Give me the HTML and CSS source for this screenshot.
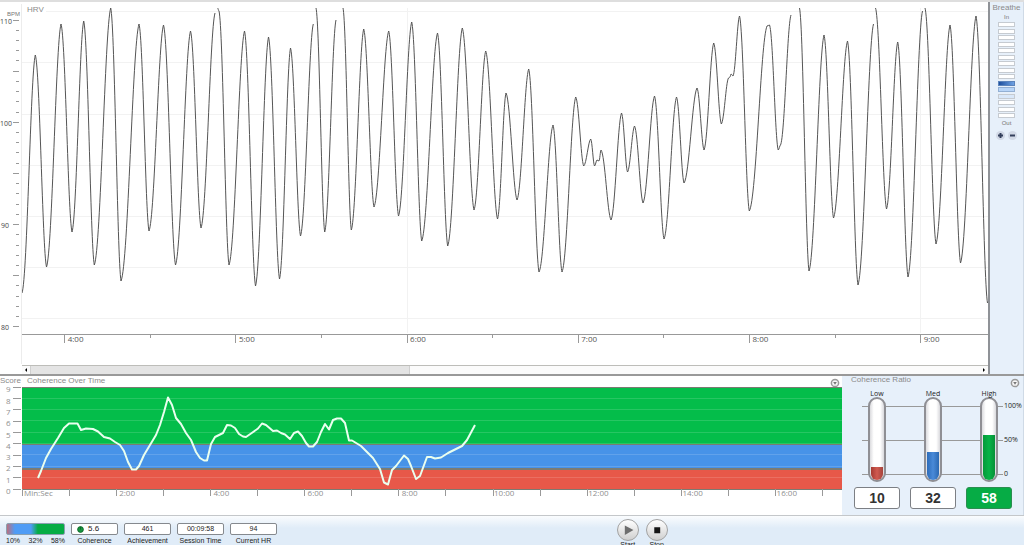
FILE: index.html
```html
<!DOCTYPE html>
<html lang="en">
<head>
  <meta charset="UTF-8" />
  <meta name="viewport" content="width=device-width, initial-scale=1.0" />
  <title>HRV Session</title>
  <link rel="stylesheet" href="styles.css">
</head>
<body>

  <main class="top">
    <section class="hrv">
      <div class="chart">
        <svg class="axis" id="hrvAxis"></svg>
        <svg class="plot hrv-plot" id="hrvPlot">
          <text class="title" x="5" y="10">HRV</text>
        </svg>
      </div>
      <div class="scrollbar">
        <button class="arrow" aria-label="Scroll left"><svg viewBox="0 0 8 8"><path d="M5 2v4L3 4z"/></svg></button>
        <div class="track"><div class="thumb"></div></div>
        <button class="arrow" aria-label="Scroll right"><svg viewBox="0 0 8 8"><path d="M3 2v4l2-2z"/></svg></button>
      </div>
    </section>

    <aside class="breathe">
      <h2>Breathe</h2>
      <span class="small">In</span>
      <div class="bars">
        <i></i><i></i><i></i><i></i><i></i><i></i><i></i><i></i><i></i>
        <i class="now"></i><i class="trail"></i><i class="fade"></i>
        <i></i><i></i><i></i>
      </div>
      <span class="small">Out</span>
      <div class="pace">
        <button aria-label="Faster"><svg viewBox="0 0 9 9"><path d="M2 4.5h5M4.5 2v5"/></svg></button>
        <button aria-label="Slower"><svg viewBox="0 0 9 9"><path d="M2 4.5h5"/></svg></button>
      </div>
    </aside>
  </main>

  <div class="middle">
    <section class="coherence">
      <div class="panel-head">
        <span class="score">Score</span>
        <h2>Coherence Over Time</h2>
        <button class="menu" aria-label="Chart options"><svg viewBox="0 0 10 10"><circle cx="5" cy="5" r="3.6"/><path d="M3.2 4h3.6L5 6.8z"/></svg></button>
      </div>
      <div class="chart">
        <svg class="axis" id="cohAxis"></svg>
        <svg class="plot coh-plot" id="cohPlot"></svg>
      </div>
    </section>

    <section class="ratio">
      <div class="panel-head">
        <h2>Coherence Ratio</h2>
        <button class="menu" aria-label="Ratio options"><svg viewBox="0 0 10 10"><circle cx="5" cy="5" r="3.6"/><path d="M3.2 4h3.6L5 6.8z"/></svg></button>
      </div>
      <svg class="gauges" id="gauges" viewBox="0 0 181 96">
        <defs>
          <linearGradient id="glass">
            <stop offset="0" stop-color="#d2d2d6"/>
            <stop offset=".3" stop-color="#fff"/>
            <stop offset=".7" stop-color="#fff"/>
            <stop offset="1" stop-color="#cfcfd4"/>
          </linearGradient>
          <linearGradient id="low"><stop offset="0" stop-color="#a53a32"/><stop offset=".5" stop-color="#d05a50"/><stop offset="1" stop-color="#a5443c"/></linearGradient>
          <linearGradient id="med"><stop offset="0" stop-color="#2c6cba"/><stop offset=".5" stop-color="#4a8ad8"/><stop offset="1" stop-color="#2c69b2"/></linearGradient>
          <linearGradient id="high"><stop offset="0" stop-color="#05993a"/><stop offset=".5" stop-color="#06b446"/><stop offset="1" stop-color="#078f38"/></linearGradient>
        </defs>
      </svg>
      <div class="values">
        <output>10</output>
        <output>32</output>
        <output class="on">58</output>
      </div>
    </section>
  </div>

  <footer class="status">
    <div class="split">
      <div class="split-bar"></div>
      <div class="split-text"><span>10%</span><span>32%</span><span>58%</span></div>
    </div>
    <div class="stat"><b class="with-icon"><svg viewBox="0 0 8 8"><circle cx="4" cy="4" r="3.3"/><path d="M4 1v3"/></svg>5.6</b><span>Coherence</span></div>
    <div class="stat"><b>461</b><span>Achievement</span></div>
    <div class="stat"><b>00:09:58</b><span>Session Time</span></div>
    <div class="stat"><b>94</b><span>Current HR</span></div>
    <div class="transport">
      <button><svg viewBox="0 0 22 22"><path d="M7.500 6v10.500L17 11z" fill="#6e6e6e"/></svg><span>Start</span></button>
      <button><svg viewBox="0 0 22 22"><path d="M8 8h6.500v6.500H8z" fill="#151515"/></svg><span>Stop</span></button>
    </div>
  </footer>

  <script src="script.js"></script>
</body>
</html>
```
FILE: styles.css
```css
* {
  box-sizing: border-box;
}

body {
  margin: 0;
  height: 100vh;
  overflow: hidden;
  display: flex;
  flex-direction: column;
  background: #fff;
  font-family: "Liberation Sans", Arial, sans-serif;
  font-size: 8px;
  color: #333;
}

h2 {
  margin: 0;
  font-size: 8px;
  line-height: 10px;
  font-weight: normal;
  color: #8b8b8b;
}

button {
  padding: 0;
  border: 0;
  background: none;
  font: inherit;
  color: inherit;
  cursor: pointer;
}

svg {
  display: block;
}

svg text {
  font-family: "Open Sans", sans-serif;
  font-size: 8px;
}

/* heart rate chart */
.top {
  flex: 1;
  display: flex;
  min-height: 0;
  border-top: 2px solid #dedede;
  border-bottom: 2px solid #999;
}

.hrv {
  flex: 1;
  min-width: 0;
  display: flex;
  flex-direction: column;
  justify-content: space-between;
  border-right: 2px solid #8f9297;
}

.chart {
  display: grid;
  grid-template-columns: 22px 1fr;
}

.axis {
  width: 22px;
  height: 100%;
}

.plot {
  width: 100%;
}

.hrv-plot {
  height: 362px;
}

.title {
  fill: #8b8b8b;
}

svg .title {
  font-family: "Liberation Sans", Arial, sans-serif;
}

.tick {
  stroke: #999;
}

.grid {
  stroke: #f2f2f2;
}

.edge {
  stroke: #ececec;
}

.label {
  fill: #555;
}

svg .axis-label {
  font-size: 7px;
  fill: #444;
}

svg .unit {
  font-size: 6px;
  fill: #777;
}

.trace {
  fill: none;
  stroke: #555;
  stroke-width: 1;
  stroke-linejoin: round;
}

.scrollbar {
  display: flex;
  height: 9px;
  margin-left: 22px;
  border-top: 1px solid #bdbdb9;
  background: #fbfbfb;
}

.arrow {
  width: 8px;
}

.arrow svg {
  width: 8px;
  height: 8px;
}

.track {
  flex: 1;
}

.thumb {
  width: 40%;
  height: 8px;
  background: #e4e4e4;
  border: solid #cfcfcf;
  border-width: 0 1px;
}

/* breathing pacer */
.breathe {
  width: 34px;
  display: flex;
  flex-direction: column;
  align-items: center;
  padding-top: 1px;
  background: #e7f0fa;
  border-right: 1px solid #cfdae6;
}

.small {
  font-size: 6px;
  line-height: 8px;
  color: #777;
}

.bars {
  height: 96px;
  margin: 1px 0;
  display: flex;
  flex-direction: column;
  justify-content: space-between;
}

.bars i {
  width: 17px;
  height: 5px;
  background: #fff;
  border: 1px solid #c6cbd1;
}

.bars .now {
  background: linear-gradient(to right, #1d4f9e, #6ea2e4);
  border-color: #5b83bb;
}

.bars .trail {
  background: #b8d5f8;
  border-color: #93b0d4;
}

.bars .fade {
  background: #d9e8fa;
}

.pace {
  display: flex;
  gap: 3px;
  margin-top: 4px;
}

.pace svg {
  width: 9px;
  height: 9px;
  border-radius: 50%;
  background: #d2d9e6;
  stroke: #34405c;
  stroke-width: 2;
}

/* coherence panels */
.middle {
  display: flex;
  height: 140px;
  border-bottom: 1px solid #c4c7ca;
}

.coherence {
  flex: 1;
  min-width: 0;
}

.panel-head {
  display: flex;
  align-items: flex-start;
  height: 11px;
}

.coherence .panel-head {
  height: 10px;
}

.score {
  width: 27px;
  line-height: 10px;
  color: #8b8b8b;
}

.menu {
  margin: 2px 2px 0 auto;
}

.menu svg {
  width: 10px;
  height: 10px;
  fill: #777;
}

.menu circle {
  fill: #f6f6f6;
  stroke: #999;
  stroke-width: 1.5;
}

.coh-plot {
  height: 116px;
}

#cohAxis {
  overflow: visible;
}

.green { fill: #04bd4a; }
.blue { fill: #4793e8; }
.red { fill: #e75849; }

.band-edge {
  stroke: #7b7b72;
}

.band-grid {
  stroke: #fff;
  stroke-opacity: .14;
}

.soft {
  fill: #8f8f8f;
}

.coh-trace {
  fill: none;
  stroke: #eaffef;
  stroke-width: 2;
  stroke-linejoin: round;
}

.ratio {
  width: 182px;
  background: #e7f0fa;
  border-right: 1px solid #cfdae6;
}

.ratio .panel-head {
  padding-left: 9px;
}

.ratio .menu {
  margin-right: 3px;
}

.ratio h2 {
  line-height: 8px;
}

.gauges {
  width: 181px;
  height: 96px;
}

svg .gauge-label {
  font-size: 7px;
  fill: #222;
}

.values {
  display: flex;
  gap: 10px;
  padding: 4px 0 0 12px;
}

.values output {
  width: 46px;
  height: 22px;
  border: 1px solid #7c7f84;
  border-radius: 3px;
  background: #fff;
  font-size: 14px;
  line-height: 21px;
  font-weight: bold;
  text-align: center;
}

.values .on {
  background: #06ac45;
  border-color: #2b8e50;
  color: #fff;
}

/* bottom bar */
.status {
  display: flex;
  gap: 6px;
  height: 29px;
  padding: 7px 0 0 6px;
  background: linear-gradient(to bottom, #fafcfe, #e0ecf8 12px);
  font-size: 7px;
  line-height: 10px;
  color: #222;
}

.split {
  width: 59px;
}

.split-bar {
  height: 12px;
  border: 1px solid #8aa0b0;
  border-radius: 2px;
  background: linear-gradient(to right, #b9707f, #4f9cf5 14%, #4f9cf5 42%, #06ac45 54%);
}

.split-text {
  display: flex;
  justify-content: space-between;
  margin-top: 1px;
}

.stat {
  width: 47px;
  text-align: center;
  white-space: nowrap;
}

.stat b {
  display: flex;
  align-items: center;
  justify-content: center;
  gap: 4px;
  height: 12px;
  margin-bottom: 1px;
  border: 1px solid #85898e;
  border-radius: 2px;
  background: #fff;
  font-weight: normal;
}

.stat .with-icon {
  justify-content: flex-start;
  padding-left: 5px;
  font-size: 8px;
}

.stat svg {
  width: 7px;
  height: 7px;
  fill: #17963f;
  stroke: #0b6328;
}

.transport {
  display: flex;
  gap: 7px;
  margin: -4px 35% 0 auto;
}

.transport button {
  display: flex;
  flex-direction: column;
  align-items: center;
  width: 22px;
  height: 34px;
}

.transport svg {
  flex: none;
  width: 22px;
  height: 22px;
  border: 1px solid #a2a2a2;
  border-radius: 50%;
  background: linear-gradient(to bottom, #fff, #cfcfcf);
}

.transport span {
  line-height: 8px;
}
```
FILE: script.js
```js
const NS = "http://www.w3.org/2000/svg";

function add(parent, tag, attrs, text) {
  const el = document.createElementNS(NS, tag);
  for (const key in attrs) el.setAttribute(key, attrs[key]);
  if (text !== undefined) el.textContent = text;
  parent.appendChild(el);
  return el;
}

function line(parent, cls, x1, y1, x2, y2) {
  add(parent, "line", { class: cls, x1, y1, x2, y2, "shape-rendering": "crispEdges" });
}

// the trace stretches with the window, its line width does not
function trace(parent, cls, d, width, height) {
  const box = add(parent, "svg", {
    width: "100%", height, viewBox: `0 0 ${width} ${height}`, preserveAspectRatio: "none"
  });
  add(box, "path", { class: cls, d, "vector-effect": "non-scaling-stroke" });
}

/* ---- HRV ---- */
const HRV_W = 966;
const hrvAxis = document.getElementById("hrvAxis");
const hrvPlot = document.getElementById("hrvPlot");

// turning points of the pulse curve; a new run starts where the signal leaves the scale
const hrvRuns = [
  [[22,293],[35.3,55],[46.5,267],[61,24],[72,232],[83.7,21],[94.3,265],[110.7,8],[121,281],[139,24],[149,231],[163.5,25],[175.5,265],[190.5,31],[201,228],[215,13]],
  [[217.5,8],[219,11],[229,265],[244.5,31],[255.5,286],[268.5,37],[279.5,279],[290.5,48],[300.5,236],[313.3,24]],
  [[316,8],[324.7,232],[336,20]],
  [[343,8],[351.3,230],[363.7,29],[374,207],[388.7,31],[398.5,216],[411.7,22],[421.7,241],[437.5,33],[447.7,246],[462.3,28],[474,210],[485.7,51],[497.5,219],[506,93],[517,200],[528.7,69],[539,272],[553,125],[562,272],[575.7,97],[583.7,166],[590.7,139],[594.5,166],[597,160],[599,161],[601,150],[611,220],[621.5,113],[627.5,172],[634.5,126],[643,203],[654.5,96],[664,239],[676.5,97],[684,183],[697,88],[704,150],[713.7,43],[721.3,124],[728.5,78],[730,77],[731,74],[733,76],[739.5,16],[749.3,211],[767,26],[769.5,25],[778.2,150],[780.5,145],[791,15]],
  [[799.5,8],[809,271],[824,35],[833.5,218],[847.5,41],[858,285],[873.5,24]],
  [[875.5,8],[886.5,209],[897.7,42],[908,277],[922.5,11]],
  [[925,8],[936,244],[950,25],[960.5,263],[976,16],[987.5,303]]
];

function wave(run) {
  let d = "";
  run.forEach(([px, py], i) => {
    const x = px - 22, y = py - 2;
    if (i === 0) {
      d += `M${x} ${y}`;
      return;
    }
    const x0 = run[i - 1][0] - 22, y0 = run[i - 1][1] - 2;
    const dx = x - x0, dy = y - y0;
    d += `C${x0 + dx * .4} ${y0 + dy * .06} ${x - dx * .36} ${y - dy * .08} ${x} ${y}`;
  });
  return d;
}

[9, 60, 112, 163, 214, 265, 316].forEach((y, i) => line(hrvPlot, "grid", i ? 0 : 24, y, "100%", y));
[385, 898].forEach(x => line(hrvPlot, "grid", x / HRV_W * 100 + "%", 6, x / HRV_W * 100 + "%", 331));
trace(hrvPlot, "trace", hrvRuns.map(wave).join(""), HRV_W, 362);

line(hrvPlot, "tick", 0, 332, "100%", 332);
for (let i = 0; i < 11; i++) {
  const x = 42.7 + i * 85.6;
  const pos = x / HRV_W * 100 + "%";
  line(hrvPlot, "tick", pos, 332, pos, i % 2 ? 336 : 341);
  if (i % 2 === 0) {
    add(hrvPlot, "text", { class: "label", x: pos, dx: 3, y: 340 }, 4 + i / 2 + ":00");
  }
}

for (let i = 0; i <= 30; i++) {
  const y = 18 + i * 10.23;
  line(hrvAxis, "tick", i % 5 ? 16 : 13, y, 19, y);
}
line(hrvAxis, "edge", 21, 2, 21, "100%");
[110, 100, 90, 80].forEach((n, i) => {
  add(hrvAxis, "text", { class: "axis-label", x: n > 99 ? 0 : 1, y: 22 + i * 102 }, n);
});
add(hrvAxis, "text", { class: "title unit", x: 20, y: 14, "text-anchor": "end" }, "BPM");

/* ---- Coherence over time ---- */
const COH_W = 820;
const cohAxis = document.getElementById("cohAxis");
const cohPlot = document.getElementById("cohPlot");

const coherence = [
  [38,478],[41,471],[46,458],[51,449],[58,438],[64,428],[69,423.5],[77.5,423.5],[81,430],[86,428.5],[93,429],[98,431.5],
  [104,437],[110,438.5],[115,442],[120,445],[124,451],[128,462],[132,469.5],[136,469.5],[139,466],[144,455],[150,445],
  [156,435],[160,425],[164,412],[168,397.5],[172,405],[176,418],[181,424],[186,433],[191,440],[196,452],[200,458],
  [204,460.5],[207,460.5],[211,444],[215,437],[223,433],[227,425],[231,425.5],[235,428],[239,434],[243,436.5],[246,437],
  [251,433.5],[258,428.5],[262,423.5],[266,425],[273,431],[277,430.5],[281,433],[285,434.5],[290,439],[294,433],
  [298,431.5],[302,436],[306,443],[309,446.5],[313,446.5],[317,442],[321,432],[325,424],[329,429.5],[333,420],[337,418.5],
  [341,418.5],[345,423],[349,440.5],[352,440.5],[361,446],[373,458],[380,469],[384,482.5],[388,484.5],[392,470],
  [396,466],[404,455.5],[408,459],[411,466],[416,479],[420,476],[427,457],[431,457],[435,458.5],[441,457.5],[448,453],
  [456,449],[462,446],[467,440],[475,425]
];

add(cohPlot, "rect", { class: "green", y: 1, width: "100%", height: 57 });
add(cohPlot, "rect", { class: "blue", y: 58, width: "100%", height: 24 });
add(cohPlot, "rect", { class: "red", y: 82, width: "100%", height: 21 });
for (let i = 1; i < 9; i++) line(cohPlot, "band-grid", 0, 1 + i * 11.3, "100%", 1 + i * 11.3);
[1, 58, 82, 83, 103].forEach(y => line(cohPlot, "band-edge", 0, y, "100%", y));

trace(cohPlot, "coh-trace", "M" + coherence.map(([x, y]) => `${x - 22} ${y - 386}`).join("L"), COH_W, 116);

for (let i = 0; i < 18; i++) {
  const pos = i * 47.1 / COH_W * 100 + "%";
  line(cohPlot, "tick", pos, 103, pos, 110);
  if (i && i % 2 === 0) {
    add(cohPlot, "text", { class: "soft", x: pos, dx: i < 10 ? 3 : 1, y: 110 }, i + ":00");
  }
}
add(cohPlot, "text", { class: "soft", x: 2, y: 110 }, "Min:Sec");

for (let n = 0; n <= 9; n++) {
  const y = 103 - n * 11.3;
  line(cohAxis, "tick", 13, y, 21, y);
  add(cohAxis, "text", { class: "soft", x: 6, y: y + 5 }, n);
}

/* ---- Ratio gauges ---- */
const gauges = document.getElementById("gauges");

[["100%", 19], ["50%", 53], ["0", 87]].forEach(([text, y]) => {
  line(gauges, "tick", 20, y, 161, y);
  add(gauges, "text", { class: "gauge-label", x: 162, y: y + 2 }, text);
});
[["Low", "low", 35, 80], ["Med", "med", 91, 65], ["High", "high", 147, 48]].forEach(([name, id, x, top]) => {
  add(gauges, "rect", { x: x - 8, y: 11, width: 16, height: 83, rx: 8, fill: "url(#glass)", stroke: "#8f8f94", "stroke-width": 2 });
  add(gauges, "path", { d: `M${x - 6} ${top}h12V87a6 6 0 0 1-12 0z`, fill: `url(#${id})` });
  add(gauges, "text", { class: "gauge-label", x, y: 9, "text-anchor": "middle" }, name);
});
```
